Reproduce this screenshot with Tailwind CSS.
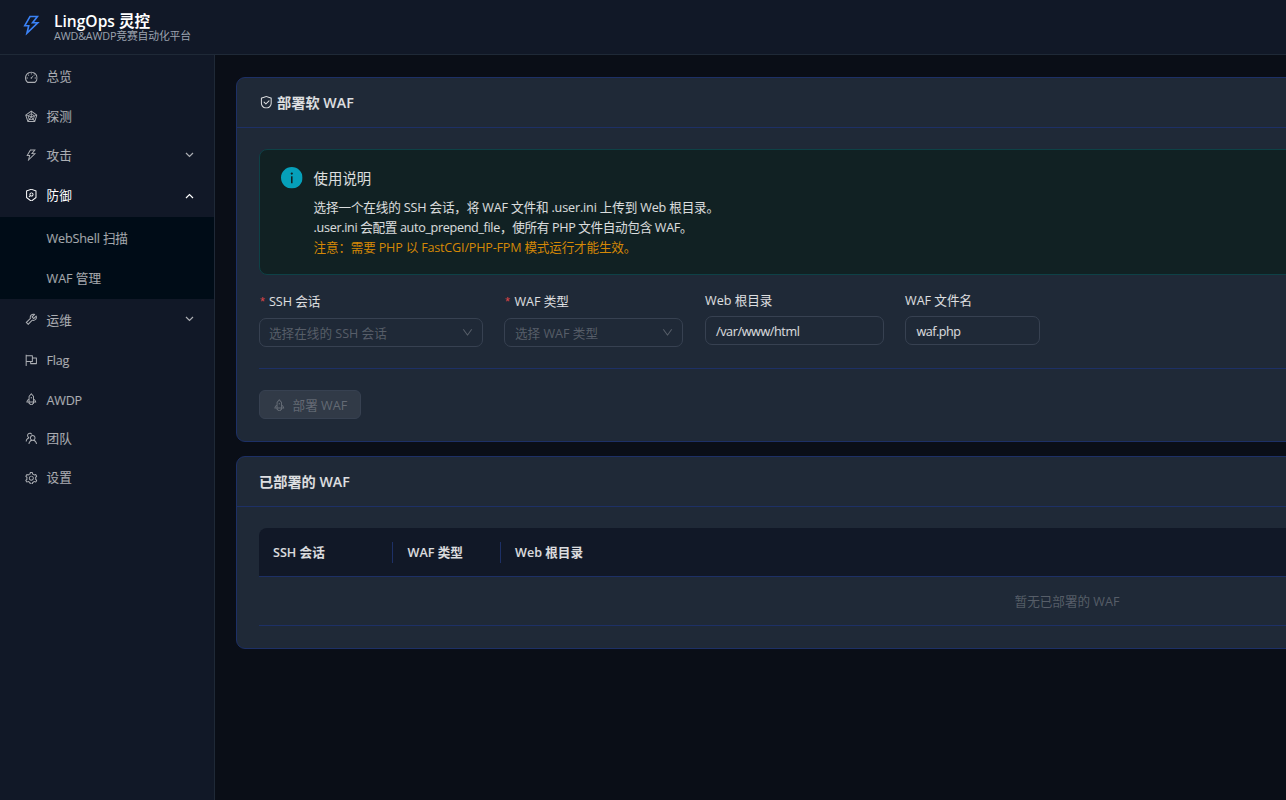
<!DOCTYPE html>
<html lang="zh-CN">
<head>
<meta charset="utf-8">
<title>LingOps 灵控</title>
<script src="https://cdn.jsdelivr.net/npm/@tailwindcss/browser@4"></script>
</head>
<body class="h-[800px] w-[1286px] overflow-hidden bg-[#0a0e17] font-['Open_Sans','Noto_Sans_CJK_SC',sans-serif] text-[12.6px] leading-5 text-white/85">
<svg class="hidden">
  <symbol id="bolt" viewBox="64 64 896 896"><path d="M848 359.3H627.7L825.8 109c4.1-5.3.4-13-6.3-13H436c-2.8 0-5.5 1.5-6.9 4L170 547.5c-3.1 5.3.7 12 6.9 12h174.4l-89.4 357.6c-1.9 7.8 7.5 13.3 13.3 7.7L853.5 373c5.2-4.9 1.7-13.7-5.5-13.7zM378.2 732.5l60.3-241H281.1l189.6-327.4h224.6L487 427.4h211L378.2 732.5z"/></symbol>
  <symbol id="dash" viewBox="64 64 896 896"><path d="M924.8 385.6a446.7 446.7 0 00-96-142.4 446.7 446.7 0 00-142.4-96C631.1 123.8 572.5 112 512 112s-119.1 11.8-174.4 35.2a446.7 446.7 0 00-142.4 96 446.7 446.7 0 00-96 142.4C75.8 440.9 64 499.5 64 560c0 132.7 58.3 257.7 159.9 343.1l1.7 1.4c5.8 4.8 13.1 7.5 20.6 7.5h531.7c7.5 0 14.8-2.7 20.6-7.5l1.7-1.4C901.7 817.7 960 692.7 960 560c0-60.5-11.9-119.1-35.2-174.4zM761.4 836H262.6A371.12 371.12 0 01140 560c0-99.4 38.7-192.8 109-263 70.3-70.3 163.7-109 263-109 99.4 0 192.8 38.7 263 109 70.3 70.3 109 163.7 109 263 0 105.6-44.5 205.5-122.6 276zM623.5 421.5a8.03 8.03 0 00-11.3 0L527.7 506c-18.7-5-39.4-.2-54.1 14.5a55.95 55.95 0 000 79.2 55.95 55.95 0 0079.2 0 55.87 55.87 0 0014.5-54.1l84.5-84.5c3.1-3.1 3.1-8.2 0-11.3l-28.3-28.3zM490 320h44c4.4 0 8-3.6 8-8v-80c0-4.4-3.6-8-8-8h-44c-4.4 0-8 3.6-8 8v80c0 4.4 3.6 8 8 8zm260 218v44c0 4.4 3.6 8 8 8h80c4.4 0 8-3.6 8-8v-44c0-4.4-3.6-8-8-8h-80c-4.4 0-8 3.6-8 8zm12.7-197.2l-31.1-31.1a8.03 8.03 0 00-11.3 0l-56.6 56.6a8.03 8.03 0 000 11.3l31.1 31.1c3.1 3.1 8.2 3.1 11.3 0l56.6-56.6c3.1-3.1 3.1-8.2 0-11.3zm-458.6-31.1a8.03 8.03 0 00-11.3 0l-31.1 31.1a8.03 8.03 0 000 11.3l56.6 56.6c3.1 3.1 8.2 3.1 11.3 0l31.1-31.1c3.1-3.1 3.1-8.2 0-11.3l-56.6-56.6zM262 530h-80c-4.4 0-8 3.6-8 8v44c0 4.4 3.6 8 8 8h80c4.4 0 8-3.6 8-8v-44c0-4.4-3.6-8-8-8z"/></symbol>
  <symbol id="radar" viewBox="64 64 896 896"><path d="M926.8 397.1l-396-288a31.81 31.81 0 00-37.6 0l-396 288a31.99 31.99 0 00-11.6 35.8l151.3 466a32 32 0 0030.4 22.1h489.5c13.9 0 26.1-8.9 30.4-22.1l151.3-466c4.2-13.2-.5-27.6-11.7-35.8zM838.6 417l-98.5 32-200-144.7V199.9L838.6 417zM466 567.2l-89.1 122.3-55.2-169.2L466 567.2zm-116.3-96.8L484 373.3v140.8l-134.3-43.7zM512 599.2l93.9 128.9H418.1L512 599.2zm28.1-225.9l134.2 97.1L540.1 514V373.3zM558 567.2l144.3-46.9-55.2 169.2L558 567.2zm-74-367.3v104.4L283.9 449l-98.5-32L484 199.9zM169.3 470.8l86.5 28.1 80.4 246.4-53.8 73.9-113.1-348.4zM327.1 853l50.3-69h269.3l50.3 69H327.1zm414.5-33.8l-53.8-73.9 80.4-246.4 86.5-28.1-113.1 348.4z"/></symbol>
  <symbol id="scan" viewBox="64 64 896 896"><path d="M866.9 169.9L527.1 54.1C523 52.7 517.5 52 512 52s-11 .7-15.1 2.1L157.1 169.9c-8.3 2.8-15.1 12.4-15.1 21.2v482.4c0 8.8 5.7 20.4 12.6 25.9L499.3 968c3.5 2.7 8 4.1 12.6 4.1s9.2-1.4 12.6-4.1l344.7-268.6c6.9-5.4 12.6-17 12.6-25.9V191.1c.2-8.8-6.6-18.3-14.9-21.2zM810 654.3L512 886.5 214 654.3V226.7l298-101.6 298 101.6v427.6zM402.9 528.8l-77.5 77.5a8.03 8.03 0 000 11.3l34 34c3.1 3.1 8.2 3.1 11.3 0l77.5-77.5c55.7 35.1 130.1 28.4 178.6-20.1 56.3-56.3 56.3-147.5 0-203.8-56.3-56.3-147.5-56.3-203.8 0-48.5 48.5-55.2 123-20.1 178.6zm65.4-133.3c31.3-31.3 82-31.3 113.2 0 31.3 31.3 31.3 82 0 113.2-31.3 31.3-82 31.3-113.2 0s-31.3-81.9 0-113.2z"/></symbol>
  <symbol id="tool" viewBox="64 64 896 896"><path d="M876.6 239.5c-.5-.9-1.2-1.8-2-2.5-5-5-13.1-5-18.1 0L684.2 409.3l-67.9-67.9L788.7 169c.8-.8 1.4-1.6 2-2.5 3.6-6.1 1.6-13.9-4.5-17.5-98.2-58-226.8-44.7-311.3 39.7-67 67-89.2 162-66.5 247.4l-293 293c-3 3-2.8 7.9.3 11l169.7 169.7c3.1 3.1 8.1 3.3 11 .3l292.9-292.9c85.5 22.8 180.5.7 247.6-66.4 84.4-84.5 97.7-213.1 39.7-311.3zM786 499.8c-58.1 58.1-145.3 69.3-214.6 33.6l-8.8 8.8-.1-.1-274 274.1-79.2-79.2 230.1-230.1s0 .1.1.1l52.8-52.8c-35.7-69.3-24.5-156.5 33.6-214.6a184.2 184.2 0 01144-53.5L537 318.9a32.05 32.05 0 000 45.3l124.5 124.5a32.05 32.05 0 0045.3 0l132.8-132.8c3.7 51.8-14.4 104.8-53.6 143.9z"/></symbol>
  <symbol id="flag" viewBox="64 64 896 896"><path d="M880 305H624V192c0-17.7-14.3-32-32-32H184v-40c0-4.4-3.6-8-8-8h-56c-4.4 0-8 3.6-8 8v784c0 4.4 3.6 8 8 8h56c4.4 0 8-3.6 8-8V640h248v113c0 17.7 14.3 32 32 32h416c17.7 0 32-14.3 32-32V337c0-17.7-14.3-32-32-32zM184 568V232h368v336H184zm656 145H504v-73h112c4.4 0 8-3.6 8-8V377h216v336z"/></symbol>
  <symbol id="rocket" viewBox="64 64 896 896"><path d="M864 736c0-111.6-65.4-208-160-252.9V317.3c0-15.1-5.3-29.7-15.1-41.2L536.5 95.4C530.1 87.8 521 84 512 84s-18.1 3.8-24.5 11.4L335.1 276.1a63.97 63.97 0 00-15.1 41.2v165.8C225.4 528 160 624.4 160 736h156.5c-2.3 7.2-3.5 15-3.5 23.8 0 22.1 7.6 43.7 21.4 60.8a97.2 97.2 0 0043.1 30.6c23.1 54 75.6 88.8 134.5 88.8 29.1 0 57.3-8.6 81.4-24.8 23.6-15.8 41.9-37.9 53-64a97 97 0 0043.1-30.5 97.52 97.52 0 0021.4-60.8c0-8.4-1.1-16.4-3.1-23.8H864zM762.3 621.4c9.4 14.6 17 30.3 22.5 46.6H700V558.7a211.6 211.6 0 0162.3 62.7zM388 483.1V318.8l124-147 124 147V668H388V483.1zM239.2 668c5.5-16.3 13.1-32 22.5-46.6 16.3-25.2 37.5-46.5 62.3-62.7V668h-84.8zm388.9 116.2c-5.2 3-11.2 4.2-17.1 3.4l-19.5-2.4-2.8 19.4c-5.4 37.9-38.4 66.5-76.7 66.5-38.3 0-71.3-28.6-76.7-66.5l-2.8-19.5-19.5 2.5a27.7 27.7 0 01-17.1-3.5c-8.7-5-14.1-14.3-14.1-24.4 0-10.6 5.9-19.4 14.6-23.8h231.3c8.8 4.5 14.6 13.3 14.6 23.8-.1 10.2-5.5 19.6-14.2 24.5zM464 400a48 48 0 1096 0 48 48 0 10-96 0z"/></symbol>
  <symbol id="team" viewBox="64 64 896 896"><path d="M824.2 699.9a301.55 301.55 0 00-86.4-60.4C783.1 602.8 812 546.8 812 484c0-110.8-92.4-201.7-203.2-200-109.1 1.7-197 90.6-197 200 0 62.8 29 118.8 74.2 155.5a300.95 300.95 0 00-86.4 60.4C345 754.6 314 826.8 312 903.8a8 8 0 008 8.2h56c4.3 0 7.9-3.4 8-7.7 1.9-58 25.4-112.3 66.7-153.5A226.62 226.62 0 01612 684c60.9 0 118.2 23.7 161.3 66.8C814.6 792 838 846.3 840 904.3c.1 4.3 3.7 7.7 8 7.7h56a8 8 0 008-8.2c-2-77-33-149.2-87.8-203.9zM612 612c-34.2 0-66.4-13.3-90.5-37.5a126.86 126.86 0 01-37.5-91.8c.3-32.8 13.4-64.5 36.3-88 24-24.6 56.1-38.3 90.4-38.7 33.9-.3 66.8 12.9 91 36.6 24.8 24.3 38.4 56.8 38.4 91.4 0 34.2-13.3 66.3-37.5 90.5A127.3 127.3 0 01612 612zM361.5 510.4c-.9-8.7-1.4-17.5-1.4-26.4 0-15.9 1.5-31.4 4.3-46.5.7-3.6-1.2-7.3-4.5-8.8-13.6-6.1-26.1-14.5-36.9-25.1a127.54 127.54 0 01-38.7-95.4c.9-32.1 13.8-62.6 36.3-85.6 24.7-25.3 57.9-39.1 93.2-38.7 31.9.3 62.7 12.6 86 34.4 7.9 7.4 14.7 15.6 20.4 24.4 2 3.1 5.9 4.4 9.3 3.2 17.6-6.1 36.2-10.4 55.3-12.4 5.6-.6 8.8-6.6 6.3-11.6-32.5-64.3-98.9-108.7-175.7-109.9-110.9-1.7-203.3 89.2-203.3 199.9 0 62.8 28.9 118.8 74.2 155.5-31.8 14.7-61.1 35-86.5 60.4-54.8 54.7-85.8 126.9-87.8 204a8 8 0 008 8.2h56.1c4.3 0 7.9-3.4 8-7.7 1.9-58 25.4-112.3 66.7-153.5 29.4-29.4 65.4-49.8 104.7-59.7 3.9-1 6.5-4.7 6-8.7z"/></symbol>
  <symbol id="gear" viewBox="64 64 896 896"><path d="M924.8 625.7l-65.5-56c3.1-19 4.7-38.4 4.7-57.8s-1.6-38.8-4.7-57.8l65.5-56a32.03 32.03 0 009.3-35.2l-.9-2.6a443.74 443.74 0 00-79.7-137.9l-1.8-2.1a32.12 32.12 0 00-35.1-9.5l-81.3 28.9c-30-24.6-63.5-44-99.7-57.6l-15.7-85a32.05 32.05 0 00-25.8-25.7l-2.7-.5c-52.1-9.4-106.9-9.4-159 0l-2.7.5a32.05 32.05 0 00-25.8 25.7l-15.8 85.4a351.86 351.86 0 00-99 57.4l-81.9-29.1a32 32 0 00-35.1 9.5l-1.8 2.1a446.02 446.02 0 00-79.7 137.9l-.9 2.6c-4.5 12.5-.8 26.5 9.3 35.2l66.3 56.6c-3.1 18.8-4.6 38-4.6 57.1 0 19.2 1.5 38.4 4.6 57.1L99 625.5a32.03 32.03 0 00-9.3 35.2l.9 2.6c18.1 50.4 44.9 96.9 79.7 137.9l1.8 2.1a32.12 32.12 0 0035.1 9.5l81.9-29.1c29.8 24.5 63.1 43.9 99 57.4l15.8 85.4a32.05 32.05 0 0025.8 25.7l2.7.5a449.4 449.4 0 00159 0l2.7-.5a32.05 32.05 0 0025.8-25.7l15.7-85a350 350 0 0099.7-57.6l81.3 28.9a32 32 0 0035.1-9.5l1.8-2.1c34.8-41.1 61.6-87.5 79.7-137.9l.9-2.6c4.5-12.3.8-26.3-9.3-35zM788.3 465.9c2.5 15.1 3.8 30.6 3.8 46.1s-1.3 31-3.8 46.1l-6.6 40.1 74.7 63.9a370.03 370.03 0 01-42.6 73.6L721 702.8l-31.4 25.8c-23.9 19.6-50.5 35-79.3 45.8l-38.1 14.3-17.9 97a377.5 377.5 0 01-85 0l-17.9-97.2-37.8-14.5c-28.5-10.8-55-26.2-78.7-45.7l-31.4-25.9-93.4 33.2c-17-22.9-31.2-47.6-42.6-73.6l75.5-64.5-6.5-40c-2.4-14.9-3.7-30.3-3.7-45.5 0-15.3 1.2-30.6 3.7-45.5l6.5-40-75.5-64.5c11.3-26.1 25.6-50.7 42.6-73.6l93.4 33.2 31.4-25.9c23.7-19.5 50.2-34.9 78.7-45.7l37.9-14.3 17.9-97.2c28.1-3.2 56.8-3.2 85 0l17.9 97 38.1 14.3c28.7 10.8 55.4 26.2 79.3 45.8l31.4 25.8 92.8-32.9c17 22.9 31.2 47.6 42.6 73.6L781.8 426l6.5 39.9zM512 326c-97.2 0-176 78.8-176 176s78.8 176 176 176 176-78.8 176-176-78.8-176-176-176zm79.2 255.2A111.6 111.6 0 01512 614c-29.9 0-58-11.7-79.2-32.8A111.6 111.6 0 01400 502c0-29.9 11.7-58 32.8-79.2C454 401.6 482.1 390 512 390c29.9 0 58 11.6 79.2 32.8A111.6 111.6 0 01624 502c0 29.9-11.7 58-32.8 79.2z"/></symbol>
  <symbol id="safe" viewBox="64 64 896 896"><path d="M512 64L128 192v384c0 212.1 171.9 384 384 384s384-171.9 384-384V192L512 64zm312 512c0 172.3-139.7 312-312 312S200 748.3 200 576V246l312-110 312 110v330z"/><path d="M378.4 475.1a35.91 35.91 0 00-50.9 0 35.91 35.91 0 000 50.9l129.4 129.4 2.1 2.1a33.98 33.98 0 0048.1 0L730.6 434a33.98 33.98 0 000-48.1l-2.8-2.8a33.98 33.98 0 00-48.1 0L483 579.7 378.4 475.1z"/></symbol>
  <symbol id="info" viewBox="64 64 896 896"><path d="M512 64C264.6 64 64 264.6 64 512s200.6 448 448 448 448-200.6 448-448S759.4 64 512 64zm32 664c0 4.4-3.6 8-8 8h-48c-4.4 0-8-3.6-8-8V456c0-4.4 3.6-8 8-8h48c4.4 0 8 3.6 8 8v272zm-32-344a48.01 48.01 0 010-96 48.01 48.01 0 010 96z"/></symbol>
  <symbol id="down" viewBox="64 64 896 896"><path d="M884 256h-75c-5.1 0-9.9 2.5-12.9 6.6L512 654.2 227.9 262.6c-3-4.1-7.8-6.6-12.9-6.6h-75c-6.5 0-10.3 7.4-6.5 12.7l352.6 486.1c12.8 17.6 39 17.6 51.7 0l352.6-486.1c3.9-5.3.1-12.7-6.4-12.7z"/></symbol>
</svg>

<header class="flex h-[55px] items-start border-b border-[#1f2937] bg-[#111827] pt-[13px] pl-[21px]">
  <svg class="mt-[2px] size-[21px] fill-[#3b82f6]"><use href="#bolt"/></svg>
  <div class="ml-3 flex flex-col whitespace-nowrap">
    <span class="h-4 text-[15.6px] leading-[17px] font-semibold text-white">LingOps 灵控</span>
    <span class="text-[10.8px] leading-[13px] tracking-[-0.16px] text-[#9ca3af]">AWD&amp;AWDP竞赛自动化平台</span>
  </div>
</header>

<div class="flex h-[745px]">
  <aside class="flex w-[215px] shrink-0 flex-col border-r border-[#1f2937] bg-[#111827] text-white/65">
    <div class="flex h-[44px] items-center pl-[25px]"><svg class="size-[12.6px] fill-current"><use href="#dash"/></svg><span class="ml-[9px]">总览</span></div>
    <div class="flex h-[36px] items-center pl-[25px]"><svg class="mb-px size-[12.6px] fill-current"><use href="#radar"/></svg><span class="ml-[9px]">探测</span></div>
    <div class="flex h-[42px] items-center pl-[25px]"><svg class="mb-[2px] size-[12.6px] fill-current"><use href="#bolt"/></svg><span class="ml-[9px]">攻击</span>
      <svg class="mr-[20px] mb-[2px] ml-auto h-[6px] w-[9px] fill-none stroke-current" viewBox="0 0 9 6"><path d="M1 1l3.5 3.5L8 1" stroke-width="1.2"/></svg></div>
    <div class="flex h-[40px] items-center pb-[2px] pl-[25px] text-white"><svg class="mb-[2px] size-[12.6px] fill-current"><use href="#scan"/></svg><span class="ml-[9px]">防御</span>
      <svg class="mr-[20px] ml-auto h-[6px] w-[9px] fill-none stroke-current" viewBox="0 0 9 6"><path d="M1 5l3.5-3.5L8 5" stroke-width="1.2"/></svg></div>
    <div class="flex h-[82px] flex-col bg-[#000c17] pt-[2px] pl-[46.5px]">
      <span class="h-10 leading-10 tracking-[-0.15px]">WebShell 扫描</span>
      <span class="h-10 leading-10">WAF 管理</span>
    </div>
    <div class="flex h-[43px] items-center pl-[25px]"><svg class="mb-[2px] size-[12.6px] fill-current"><use href="#tool"/></svg><span class="ml-[9px]">运维</span>
      <svg class="mr-[20px] mb-[3px] ml-auto h-[6px] w-[9px] fill-none stroke-current" viewBox="0 0 9 6"><path d="M1 1l3.5 3.5L8 1" stroke-width="1.2"/></svg></div>
    <div class="flex h-[38px] items-center pl-[25px]"><svg class="mb-[2px] size-[12.6px] fill-current"><use href="#flag"/></svg><span class="ml-[9px] tracking-[-0.25px]">Flag</span></div>
    <div class="flex h-[40px] items-center pl-[25px]"><svg class="mb-[2px] size-[12.6px] fill-current"><use href="#rocket"/></svg><span class="mt-[2px] ml-[9px] tracking-[-0.25px]">AWDP</span></div>
    <div class="flex h-[38px] items-center pl-[25px]"><svg class="mb-[2px] size-[12.6px] fill-current"><use href="#team"/></svg><span class="ml-[9px]">团队</span></div>
    <div class="flex h-[40px] items-center pl-[25px]"><svg class="size-[12.6px] fill-current"><use href="#gear"/></svg><span class="ml-[9px]">设置</span></div>
  </aside>

  <main class="flex min-w-0 flex-1 flex-col gap-[14px] overflow-hidden pt-[22px] pl-[21px] whitespace-nowrap">
    <section class="h-[365px] w-[1662px] rounded-[9px] border border-[#1d3066] bg-[#1f2937]">
      <div class="flex h-[50px] items-center border-b border-[#1d3066] pl-[23px]">
        <svg class="size-[12.6px] fill-current"><use href="#safe"/></svg>
        <span class="ml-[4.5px] text-[14.2px] font-semibold">部署软 WAF</span>
      </div>
      <div class="px-[22px] pt-[21px]">
        <div class="flex h-[126px] rounded-[8px] border border-[#0e4146] bg-[#112123] pt-[17px] pl-[21px]">
          <svg class="size-[21.6px] fill-[#06a0ba]"><use href="#info"/></svg>
          <div class="ml-[11px]">
            <p class="h-[31px] pt-px text-[14.4px] leading-[22px]">使用说明</p>
            <p class="h-5 tracking-[-0.16px]">选择一个在线的 SSH 会话，将 WAF 文件和 .user.ini 上传到 Web 根目录。</p>
            <p class="h-5 tracking-[-0.33px]">.user.ini 会配置 auto_prepend_file，使所有 PHP 文件自动包含 WAF。</p>
            <p class="h-5 tracking-[-0.19px] text-[#d48806]">注意：需要 PHP 以 FastCGI/PHP-FPM 模式运行才能生效。</p>
          </div>
        </div>
        <div class="mt-[15px] flex h-[79px] items-start border-b border-[#1d3066]">
          <div class="w-[224px] pt-[2px]">
            <p class="h-[26px]"><span class="mr-[4px] ml-px font-['Liberation_Sans'] text-[#dc4446]">*</span>SSH 会话</p>
            <div class="flex h-[29px] items-center rounded-[7px] border border-[#374151] pr-[9px] pl-[9px] text-white/25"><span class="pt-[2px]">选择在线的 SSH 会话</span><svg class="ml-auto size-[11px] fill-current"><use href="#down"/></svg></div>
          </div>
          <div class="ml-[21px] w-[179px] pt-[2px]">
            <p class="h-[26px]"><span class="mr-[4.5px] ml-px font-['Liberation_Sans'] text-[#dc4446]">*</span>WAF 类型</p>
            <div class="flex h-[29px] items-center rounded-[7px] border border-[#374151] pr-[9px] pl-[10px] text-white/25"><span class="pt-[2px]">选择 WAF 类型</span><svg class="ml-auto size-[11px] fill-current"><use href="#down"/></svg></div>
          </div>
          <div class="ml-[22px] w-[179px] pt-px">
            <p class="h-[25px]">Web 根目录</p>
            <div class="flex h-[29px] items-center rounded-[7px] border border-[#374151] pt-[2px] pl-[10px] tracking-[-0.4px]">/var/www/html</div>
          </div>
          <div class="ml-[21px] w-[135px] pt-px">
            <p class="h-[25px]">WAF 文件名</p>
            <div class="flex h-[29px] items-center rounded-[7px] border border-[#374151] pt-[2px] pl-[10.5px] tracking-[-0.5px]">waf.php</div>
          </div>
        </div>
        <div class="mt-[21px] flex h-[29px] w-[102px] items-center rounded-[6px] border border-[#374151] bg-[#313a47] pl-[13px] text-white/25">
          <svg class="mt-px size-[12.6px] fill-current"><use href="#rocket"/></svg><span class="ml-[7px] pt-[2px]">部署 WAF</span>
        </div>
      </div>
    </section>

    <section class="h-[193px] w-[1662px] rounded-[9px] border border-[#1d3066] bg-[#1f2937]">
      <div class="flex h-[50px] items-center border-b border-[#1d3066] pl-[22px] text-[14.2px] font-semibold">已部署的 WAF</div>
      <div class="px-[22px] pt-[21px]">
        <div class="flex h-[49px] items-center rounded-t-[8px] border-b border-[#1d3066] bg-[#111827] font-semibold">
          <div class="h-[21px] w-[134px] border-r border-[#1d3066] pt-px pl-[14px]">SSH 会话</div>
          <div class="h-[21px] w-[108px] border-r border-[#1d3066] pt-px pl-[14.5px]">WAF 类型</div>
          <div class="h-[21px] pt-px pl-[14px]">Web 根目录</div>
        </div>
        <div class="flex h-[49px] items-center justify-center border-b border-[#1d3066] pt-[2px] text-white/25">暂无已部署的 WAF</div>
      </div>
    </section>
  </main>
</div>
</body>
</html>
